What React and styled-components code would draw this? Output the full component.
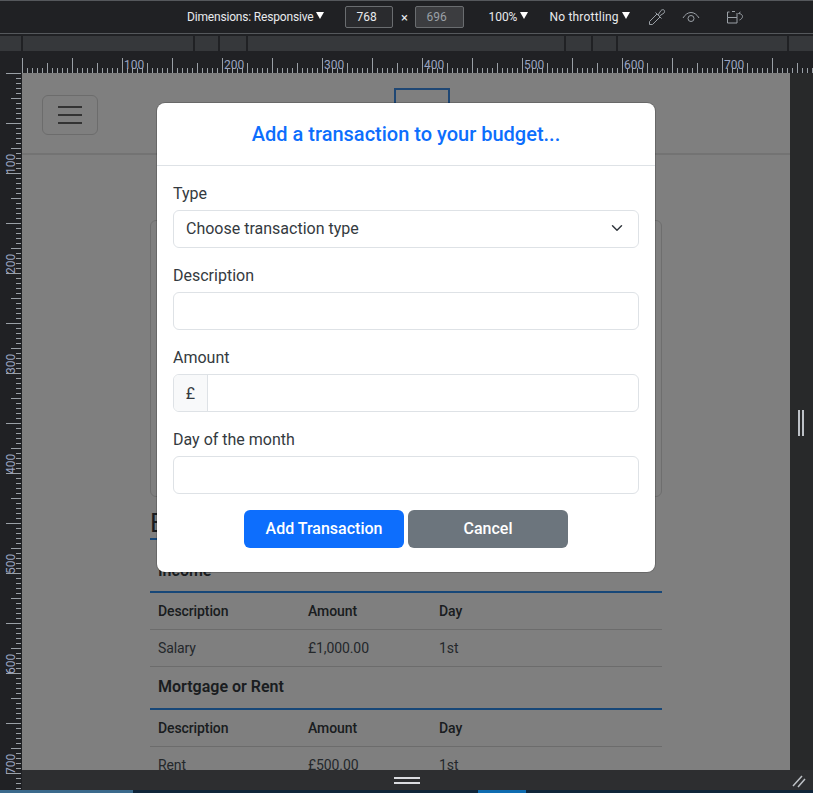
import styled, { createGlobalStyle } from "styled-components";

const GlobalStyle = createGlobalStyle`
  html, body { margin: 0; padding: 0; background: #202124; }
  * { box-sizing: border-box; }
  #root { width: 813px; height: 793px; overflow: hidden; }
`;

const range = (n) => Array.from({ length: n }, (_, i) => i);

function TopRuler() {
  return (
    <RulerSvg width="813" height="21" viewBox="0 0 813 21">
      {range(160).map((i) => {
        const x = 22.5 + i * 5;
        const h = i % 10 === 0 ? 15 : i % 5 === 0 ? 10 : 5;
        return <line key={i} x1={x} x2={x} y1={21 - h} y2={21} stroke="#9aa0a6" />;
      })}
      {range(7).map((i) => (
        <text key={i} x={124 + i * 100} y={17} fontSize="12" fill="#9aa4c0" fontFamily="Roboto, sans-serif">
          {(i + 1) * 100}
        </text>
      ))}
    </RulerSvg>
  );
}

function LeftRuler() {
  return (
    <RulerSvg width="22" height="717" viewBox="0 0 22 717">
      {range(144).map((i) => {
        const y = 0.5 + i * 5;
        const h = i % 10 === 0 ? 15 : i % 5 === 0 ? 10 : 5;
        return <line key={i} x1={21 - h} x2={21} y1={y} y2={y} stroke="#9aa0a6" />;
      })}
      {range(7).map((i) => (
        <text
          key={i}
          transform={`translate(15 ${101 + i * 100}) rotate(-90)`}
          fontSize="12"
          fill="#9aa4c0"
          fontFamily="Roboto, sans-serif"
        >
          {(i + 1) * 100}
        </text>
      ))}
    </RulerSvg>
  );
}

const Caret = () => (
  <svg width="8" height="7" viewBox="0 0 8 7">
    <path d="M0 0h8L4 7z" fill="#fff" />
  </svg>
);

const Dropper = () => (
  <svg width="18" height="18" viewBox="0 0 18 18" fill="none" stroke="#9aa0a6" strokeWidth="1">
    <path d="M1.500 16.500v-3L9 6l3 3-7.500 7.500z" />
    <path d="M7.500 4.500l6 6" />
    <path d="M10 7l3-4.500c1-1 2.500-1 3-.5s1 2 0 3l-4.500 3" />
  </svg>
);

const Eye = () => (
  <svg width="18" height="14" viewBox="0 0 18 14" fill="none" stroke="#9aa0a6" strokeWidth="1">
    <path d="M1 8c2-3.500 5-5.500 8-5.500s6 2 8 5.500" />
    <circle cx="9" cy="8.500" r="3" />
  </svg>
);

const Rotate = () => (
  <svg width="18" height="14" viewBox="0 0 18 14" fill="none" stroke="#9aa0a6" strokeWidth="1">
    <path d="M1.500 7.500H11V13H1.500z" />
    <path d="M1.500 7.500V2h2M6 1.500h3M11 3v4.500" />
    <path d="M12.500 3.500c2.500 0 4 1.500 4 3s-1.500 3-3 3.500M12.500 3.500l2-1.500" />
  </svg>
);

const Chevron = () => (
  <svg width="12" height="12" viewBox="0 0 16 16" fill="none" stroke="#343a40" strokeWidth="2" strokeLinecap="round" strokeLinejoin="round">
    <path d="M2 5l6 6 6-6" />
  </svg>
);

function BudgetTable({ title, rows }) {
  return (
    <>
      <TableTitle>{title}</TableTitle>
      <Table>
        <thead>
          <tr>
            <HeadCell>Description</HeadCell>
            <HeadCell>Amount</HeadCell>
            <HeadCell>Day</HeadCell>
            <HeadCell />
          </tr>
        </thead>
        <tbody>
          {rows.map((row) => (
            <tr key={row[0]}>
              <Cell>{row[0]}</Cell>
              <Cell>{row[1]}</Cell>
              <Cell>{row[2]}</Cell>
              <Cell />
            </tr>
          ))}
        </tbody>
      </Table>
    </>
  );
}

export default function App() {
  return (
    <Shell>
      <GlobalStyle />
      <Toolbar>
        <ToolText $spacing={-0.18}>Dimensions: Responsive</ToolText>
        <CaretWrap><Caret /></CaretWrap>
        <SizeBox>768</SizeBox>
        <Times>×</Times>
        <SizeBox $muted>696</SizeBox>
        <ToolText $left={24}>100%</ToolText>
        <CaretWrap><Caret /></CaretWrap>
        <ToolText $left={21} $spacing={0.2}>No throttling</ToolText>
        <CaretWrap><Caret /></CaretWrap>
        <IconSlot $left={18}><Dropper /></IconSlot>
        <IconSlot $left={16}><Eye /></IconSlot>
        <IconSlot $left={26}><Rotate /></IconSlot>
      </Toolbar>
      <MediaBar>
        <MediaSegment $width={23} />
        <MediaSegment $width={172} />
        <MediaSegment $width={25} />
        <MediaSegment $width={28} />
        <MediaSegment $width={318} />
        <MediaSegment $width={27} />
        <MediaSegment $width={25} />
        <MediaSegment $width={171} />
        <MediaSegment $width={26} />
      </MediaBar>
      <TopRuler />
      <Middle>
        <LeftRuler />
        <Viewport>
          <Navbar>
            <Toggler>
              <TogglerLine />
              <TogglerLine />
              <TogglerLine />
            </Toggler>
            <LogoBox />
          </Navbar>
          <Page>
            <CardOutline />
            <SectionHeading>Budget</SectionHeading>
            <BudgetTable title="Income" rows={[["Salary", "£1,000.00", "1st"]]} />
            <BudgetTable title="Mortgage or Rent" rows={[["Rent", "£500.00", "1st"]]} />
          </Page>
          <Backdrop>
            <Modal>
              <ModalHeader>Add a transaction to your budget...</ModalHeader>
              <ModalBody>
                <Field>
                  <Label>Type</Label>
                  <Control>
                    Choose transaction type
                    <Chevron />
                  </Control>
                </Field>
                <Field>
                  <Label>Description</Label>
                  <Control />
                </Field>
                <Field>
                  <Label>Amount</Label>
                  <InputGroup>
                    <Addon>£</Addon>
                    <GroupInput />
                  </InputGroup>
                </Field>
                <Field>
                  <Label>Day of the month</Label>
                  <Control />
                </Field>
                <Actions>
                  <Button $color="#0d6efd">Add Transaction</Button>
                  <Button $color="#6c757d">Cancel</Button>
                </Actions>
              </ModalBody>
            </Modal>
          </Backdrop>
        </Viewport>
        <RightGutter>
          <Handle />
        </RightGutter>
      </Middle>
      <BottomBar>
        <BottomGrip />
        <ResizeCorner width="14" height="14" viewBox="0 0 14 14" stroke="#bdc1c6" strokeWidth="1.500">
          <path d="M1 12L10 2M6 13l7-8" />
        </ResizeCorner>
      </BottomBar>
      <TaskStrip>
        <TaskItem $width={133} $color="#3b6a8c" />
        <TaskItem $width={345} $color="#10263a" />
        <TaskItem $width={48} $color="#0f6cb0" />
      </TaskStrip>
    </Shell>
  );
}

const Shell = styled.div`
  width: 813px;
  height: 793px;
  display: flex;
  flex-direction: column;
  background: #202124;
  font-family: Roboto, "Liberation Sans", sans-serif;
`;

const Toolbar = styled.div`
  height: 34px;
  flex: none;
  display: flex;
  align-items: center;
  padding-left: 187px;
  background: #202124;
  border-top: 1px solid #55585c;
  border-bottom: 1px solid #55585c;
  color: #e8eaed;
`;

const ToolText = styled.span`
  font-size: 12px;
  margin-left: ${(p) => p.$left || 0}px;
  letter-spacing: ${(p) => p.$spacing || 0}px;
  white-space: nowrap;
`;

const CaretWrap = styled.span`
  display: flex;
  margin: 0 0 4px 3px;
`;

const SizeBox = styled.div`
  width: ${(p) => (p.$muted ? 49 : 48)}px;
  height: 22px;
  margin-left: ${(p) => (p.$muted ? 0 : 21)}px;
  padding-left: 10px;
  display: flex;
  align-items: center;
  font-size: 12px;
  border: 1px solid #6a6d70;
  border-radius: 2px;
  background: ${(p) => (p.$muted ? "#3c3d40" : "#2a2b2e")};
  color: ${(p) => (p.$muted ? "#9aa0a6" : "#e8eaed")};
`;

const Times = styled.span`
  width: 22px;
  text-align: center;
  font-size: 13px;
`;

const IconSlot = styled.span`
  display: flex;
  margin-left: ${(p) => p.$left}px;
`;

const MediaBar = styled.div`
  height: 18px;
  flex: none;
  display: flex;
  padding: 2px 0 1px;
  background: #202124;
`;

const MediaSegment = styled.div`
  width: ${(p) => p.$width}px;
  flex: none;
  background: #36383b;
  border-right: 2px solid #202124;
`;

const RulerSvg = styled.svg`
  flex: none;
  display: block;
`;

const Middle = styled.div`
  height: 697px;
  flex: none;
  display: flex;
  align-items: flex-start;
`;

const Viewport = styled.div`
  position: relative;
  width: 768px;
  height: 697px;
  flex: none;
  overflow: hidden;
  background: #fff;
  color: #343a40;
`;

const Navbar = styled.div`
  height: 82px;
  display: flex;
  padding: 22px 20px;
  border-bottom: 2px solid #e6e6e6;
`;

const Toggler = styled.div`
  width: 56px;
  height: 40px;
  display: flex;
  flex-direction: column;
  justify-content: center;
  gap: 6px;
  padding: 0 15px;
  border: 1px solid #d8d8d8;
  border-radius: 6px;
`;

const TogglerLine = styled.div`
  height: 2px;
  background: #666;
`;

const LogoBox = styled.div`
  width: 56px;
  height: 60px;
  margin: -7px 0 0 296px;
  border: 2px solid #3f8ee8;
`;

const Page = styled.div`
  width: 512px;
  margin: 65px auto 0;
`;

const CardOutline = styled.div`
  height: 277px;
  border: 1px solid #dcdcdc;
  border-radius: 6px;
`;

const SectionHeading = styled.h2`
  margin: 11px 0 0;
  width: 60px;
  font-size: 26px;
  font-weight: 400;
  line-height: 30px;
  border-bottom: 2px solid #2f8ef0;
`;

const TableTitle = styled.h5`
  margin: 0;
  padding: 21px 8px 0;
  height: 53px;
  font-size: 16px;
  font-weight: 600;
  line-height: 20px;
  border-bottom: 2px solid #2f8ef0;
`;

const Table = styled.table`
  width: 100%;
  table-layout: fixed;
  border-collapse: collapse;
  font-size: 14px;
  letter-spacing: -0.1px;
  & + h5 {
    height: 43px;
    padding-top: 10px;
  }
  & + h5 + & th {
    height: 37px;
  }
`;

const HeadCell = styled.th`
  height: 36px;
  padding: 0 8px;
  text-align: left;
  font-weight: 500;
  border-bottom: 1px solid #d8d8d8;
  &:nth-child(1) { width: 150px; }
  &:nth-child(2) { width: 131px; }
  &:nth-child(3) { width: 100px; }
`;

const Cell = styled.td`
  height: 37px;
  padding: 0 8px;
  color: #495057;
  border-bottom: 1px solid #d8d8d8;
`;

const Backdrop = styled.div`
  position: absolute;
  inset: 0;
  display: flex;
  justify-content: center;
  align-items: flex-start;
  padding-top: 30px;
  background: rgba(0, 0, 0, 0.5);
`;

const Modal = styled.div`
  width: 498px;
  height: 469px;
  background: #fff;
  border-radius: 8px;
  box-shadow: 0 0 0 1px rgba(0, 0, 0, 0.175);
  overflow: hidden;
`;

const ModalHeader = styled.div`
  height: 63px;
  display: flex;
  align-items: center;
  justify-content: center;
  font-size: 20px;
  font-weight: 500;
  color: #0d6efd;
  border-bottom: 1px solid #dee2e6;
`;

const ModalBody = styled.div`
  padding: 16px;
  display: flex;
  flex-direction: column;
  gap: 16px;
`;

const Field = styled.div`
  display: flex;
  flex-direction: column;
`;

const Label = styled.label`
  height: 24px;
  margin-bottom: 4px;
  font-size: 16px;
  line-height: 24px;
  color: #343a40;
`;

const Control = styled.div`
  height: 38px;
  display: flex;
  align-items: center;
  justify-content: space-between;
  padding: 0 15px 2px 12px;
  font-size: 16px;
  color: #343a40;
  background: #fff;
  border: 1px solid #dee2e6;
  border-radius: 6px;
`;

const InputGroup = styled.div`
  height: 38px;
  display: flex;
  border: 1px solid #dee2e6;
  border-radius: 6px;
  overflow: hidden;
`;

const Addon = styled.div`
  width: 34px;
  display: flex;
  align-items: center;
  justify-content: center;
  font-size: 16px;
  color: #343a40;
  background: #f8f9fa;
  border-right: 1px solid #dee2e6;
`;

const GroupInput = styled.div`
  flex: 1;
`;

const Actions = styled.div`
  display: flex;
  justify-content: center;
  gap: 4px;
`;

const Button = styled.button`
  width: 160px;
  height: 38px;
  padding: 0 0 2px;
  border: none;
  border-radius: 6px;
  font-family: inherit;
  font-size: 16px;
  font-weight: 500;
  color: #fff;
  background: ${(p) => p.$color};
`;

const RightGutter = styled.div`
  flex: 1;
  align-self: stretch;
  display: flex;
  align-items: center;
  padding-left: 8px;
  background: #28292a;
`;

const Handle = styled.div`
  width: 6px;
  height: 26px;
  margin-top: 2px;
  border-left: 2px solid #bdc1c6;
  border-right: 2px solid #bdc1c6;
`;

const BottomBar = styled.div`
  position: relative;
  height: 20px;
  flex: none;
  margin-left: 22px;
  display: flex;
  align-items: center;
  justify-content: center;
  background: #2d2e30;
`;

const BottomGrip = styled.div`
  width: 26px;
  height: 7px;
  margin-right: 22px;
  border-top: 2px solid #dadce0;
  border-bottom: 2px solid #dadce0;
`;

const ResizeCorner = styled.svg`
  position: absolute;
  right: 7px;
  top: 4px;
`;

const TaskStrip = styled.div`
  flex: 1;
  display: flex;
  background: #10263a;
`;

const TaskItem = styled.div`
  width: ${(p) => p.$width}px;
  background: ${(p) => p.$color};
`;
